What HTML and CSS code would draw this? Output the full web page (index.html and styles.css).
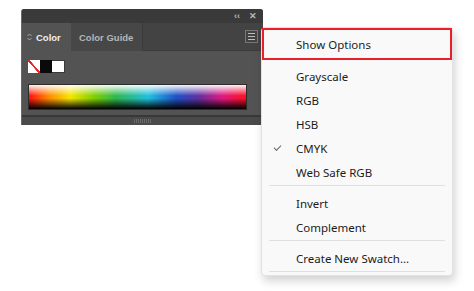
FILE: index.html
```html
<!DOCTYPE html>
<html lang="en">
<head>
  <meta charset="UTF-8" />
  <title>Color Panel</title>
  <link rel="stylesheet" href="styles.css">
</head>
<body>

  <!-- Color panel -->
  <div class="panel">
    <div class="panel-head">
      <span class="head-btn">&#x2039;&#x2039;</span>
      <span class="head-btn close">&#x2715;</span>
    </div>

    <div class="tabs">
      <div class="tab active">
        <svg class="updown" width="5" height="8" viewBox="0 0 5 8">
          <path d="M0.5 3 L2.5 1 L4.5 3 M0.5 5 L2.5 7 L4.5 5" fill="none" stroke="#aaa" stroke-width="1"/>
        </svg>
        Color
      </div>
      <div class="tab">Color Guide</div>
      <div class="tab-fill">
        <div class="menu-btn"><span></span><span></span><span></span></div>
      </div>
    </div>

    <div class="panel-body">
      <div class="swatches">
        <div class="swatch none"></div>
        <div class="swatch black"></div>
        <div class="swatch white"></div>
      </div>
      <div class="spectrum"></div>
    </div>

    <div class="panel-foot"><span class="grip"></span></div>
  </div>

  <!-- Flyout menu -->
  <div class="flyout">
    <div class="item highlight">Show Options</div>
    <div class="gap"></div>
    <div class="item">Grayscale</div>
    <div class="item">RGB</div>
    <div class="item">HSB</div>
    <div class="item checked">CMYK</div>
    <div class="item">Web Safe RGB</div>
    <div class="sep"></div>
    <div class="item">Invert</div>
    <div class="item">Complement</div>
    <div class="sep"></div>
    <div class="item">Create New Swatch...</div>
    <div class="sep last"></div>
  </div>

</body>
</html>
```

FILE: styles.css
```css
* {
  box-sizing: border-box;
}

body {
  margin: 0;
  background: #ffffff;
  font-family: 'Liberation Sans', Arial, sans-serif;
  width: 474px;
  height: 291px;
  overflow: hidden;
  position: relative;
}

.panel {
  margin: 9px 0 0 21px;
  width: 242px;
  height: 116px;
  background: #535353;
  border-left: 1px solid #6a6a6a;
  border-radius: 3px 3px 0 0;
  overflow: hidden;
  display: flex;
  flex-direction: column;
}

.panel-head {
  height: 14px;
  background: #3a3a3a;
  display: flex;
  justify-content: flex-end;
  align-items: center;
  gap: 9px;
  padding-right: 6px;
  color: #b8b8b8;
  font-size: 9px;
  font-weight: bold;
}

.tabs {
  height: 28px;
  display: flex;
  background: #434343;
}

.tab {
  width: 72px;
  display: flex;
  align-items: center;
  padding-left: 8px;
  font-size: 9.5px;
  font-weight: bold;
  color: #b5b5b5;
  background: #474747;
  border-right: 1px solid #3c3c3c;
}

.tab.active {
  width: 49px;
  padding-left: 5px;
  gap: 4px;
  background: #535353;
  color: #f0f0f0;
  border-right: none;
}

.tab-fill {
  flex: 1;
  display: flex;
  justify-content: flex-end;
  align-items: center;
  padding-right: 5px;
  border-bottom: 1px solid #3c3c3c;
}

.menu-btn {
  width: 13px;
  height: 13px;
  border: 1px solid #777;
  display: flex;
  flex-direction: column;
  justify-content: center;
  gap: 2px;
  padding: 0 2px;
}

.menu-btn span {
  height: 1px;
  background: #bdbdbd;
}

.panel-body {
  flex: 1;
  padding: 9px 0 0 6px;
}

.swatches {
  display: flex;
  height: 13px;
}

.swatch {
  width: 12px;
  height: 13px;
}

.swatch.none {
  background: linear-gradient(to top right, #fff 44%, #e8262a 45%, #e8262a 55%, #fff 56%);
}

.swatch.black {
  background: #0a0a0a;
}

.swatch.white {
  width: 13px;
  background: #ffffff;
  border: 1px solid #3a3a3a;
  border-left: none;
}

.spectrum {
  margin-top: 11px;
  width: 219px;
  height: 26px;
  border: 1px solid #2c2c2c;
  background:
    linear-gradient(to bottom, rgba(255,255,255,0.95) 0%, rgba(255,255,255,0) 45%, rgba(0,0,0,0) 55%, rgba(0,0,0,1) 100%),
    linear-gradient(to right, #ff1010 0%, #ff8a00 9%, #f6e600 19%, #7fd000 30%, #2fb850 40%, #20c0e0 55%, #2050c8 68%, #6030a0 78%, #e01880 89%, #ff1020 100%);
}

.panel-foot {
  height: 10px;
  background: #4a4a4a;
  border-top: 2px solid #383838;
  display: flex;
  justify-content: center;
  align-items: center;
}

.grip {
  width: 18px;
  height: 4px;
  background: repeating-linear-gradient(to right, #6a6a6a 0 1px, transparent 1px 2px);
}

/* flyout menu over the panel */
.flyout {
  position: absolute;
  left: 261px;
  top: 27px;
  width: 192px;
  padding-bottom: 3px;
  background: #f9f9f9;
  border: 1px solid #e2e2e2;
  border-radius: 4px;
  box-shadow: 2px 5px 10px rgba(0, 0, 0, 0.18);
  font-family: 'Noto Sans', 'Open Sans', sans-serif;
  font-size: 11.5px;
  color: #1c1c1c;
}

.item {
  height: 24px;
  display: flex;
  align-items: center;
  padding-left: 34px;
  position: relative;
}

.item.highlight {
  height: 32px;
  padding-left: 32px;
  border: 2px solid #e8202a;
}

.item.checked::before {
  content: "";
  position: absolute;
  left: 12px;
  top: 9px;
  width: 6px;
  height: 3px;
  border-left: 1px solid #666;
  border-bottom: 1px solid #666;
  transform: rotate(-45deg);
}

.gap {
  height: 4px;
}

.sep {
  height: 1px;
  margin: 1px 7px 5px;
  background: #e0e0e0;
}

.sep.last {
  margin-bottom: 0;
}
```
